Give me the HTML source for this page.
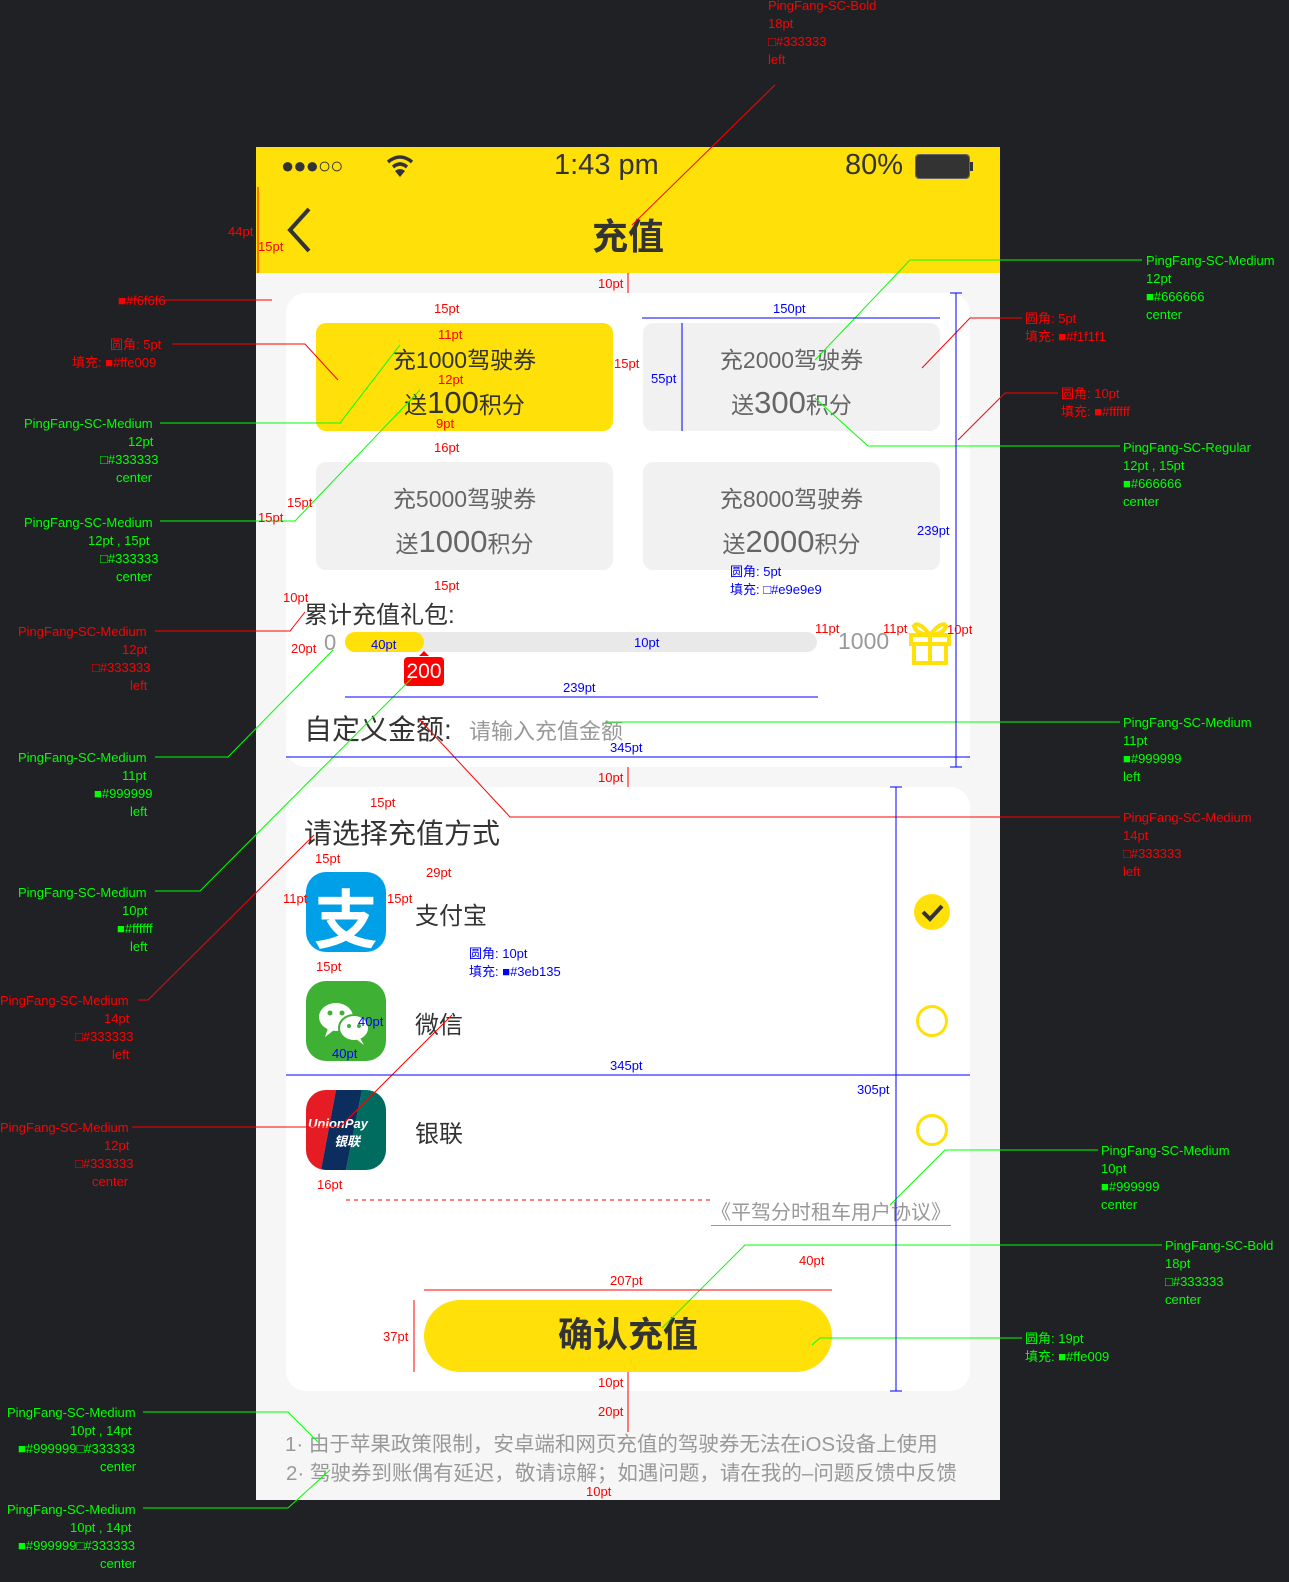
<!DOCTYPE html>
<html><head><meta charset="utf-8"><style>
*{margin:0;padding:0;box-sizing:border-box}
body{width:1289px;height:1582px;background:#202125;position:relative;overflow:hidden;font-family:"Liberation Sans","Noto Sans CJK SC",sans-serif}
.a{position:absolute;white-space:nowrap}
.phone{position:absolute;left:256px;top:147px;width:744px;height:1353px;background:#f6f6f6}
.hdr{position:absolute;left:256px;top:147px;width:744px;height:126px;background:#ffe009}
.card{position:absolute;background:#fff;border-radius:20px}
.btn{position:absolute;width:297px;height:108px;border-radius:10px;background:#f1f1f1;color:#666;text-align:center}
.btn .l1{font-size:23px;margin-top:18px}
.btn .l2{font-size:23px;margin-top:10px}
.btn .l2 b{font-weight:normal;font-size:31px}
.y{background:#ffe009;color:#333}
.ic{position:absolute;left:306px;width:80px;height:80px;border-radius:20px;overflow:hidden}
.t{color:#333;font-size:24px}
svg.ov{position:absolute;left:0;top:0}
svg text{font-family:"Liberation Sans","Noto Sans CJK SC",sans-serif;font-size:13px}
</style></head><body>
<div class="phone"></div>
<div class="hdr"></div>
<div class="a" style="left:281px;top:153px;font-size:22px;color:#333;letter-spacing:-1px">●●●○○</div>
<svg class="a" style="left:385px;top:152px" width="30" height="28" viewBox="0 0 30 28"><path d="M3 10 Q15 0 27 10" stroke="#333" stroke-width="3.5" fill="none"/><path d="M8 15 Q15 9 22 15" stroke="#333" stroke-width="3.5" fill="none"/><path d="M15 25 L10 19 Q15 15 20 19 Z" fill="#333"/></svg>
<div class="a" style="left:554px;top:149px;font-size:29px;color:#333">1:43 pm</div>
<div class="a" style="left:845px;top:149px;font-size:29px;color:#333">80%</div>
<div class="a" style="left:916px;top:155px;width:53px;height:23px;border:2px solid #333;border-radius:3px;background:#333;outline:1px solid #666"></div>
<div class="a" style="left:970px;top:162px;width:3px;height:9px;background:#333"></div>
<svg class="a" style="left:284px;top:206px" width="30" height="48"><path d="M25 3 L6 24 L25 45" stroke="#333" stroke-width="4" fill="none"/></svg>
<div class="a" style="left:592px;top:208px;font-size:36px;font-weight:bold;color:#333">充值</div>
<div class="card" style="left:286px;top:293px;width:684px;height:474px"></div>
<div class="btn y" style="left:316px;top:323px"><div class="l1">充1000驾驶券</div><div class="l2">送<b>100</b>积分</div></div>
<div class="btn" style="left:643px;top:323px"><div class="l1">充2000驾驶券</div><div class="l2">送<b>300</b>积分</div></div>
<div class="btn" style="left:316px;top:462px"><div class="l1">充5000驾驶券</div><div class="l2">送<b>1000</b>积分</div></div>
<div class="btn" style="left:643px;top:462px"><div class="l1">充8000驾驶券</div><div class="l2">送<b>2000</b>积分</div></div>
<div class="a t" style="left:304px;top:595px">累计充值礼包:</div>
<div class="a" style="left:324px;top:630px;font-size:22px;color:#999">0</div>
<div class="a" style="left:345px;top:632px;width:472px;height:20px;background:#e9e9e9;border-radius:10px"></div>
<div class="a" style="left:345px;top:632px;width:79px;height:20px;background:#ffe009;border-radius:10px"></div>
<div class="a" style="left:404px;top:657px;width:40px;height:29px;background:#f00;border-radius:4px;color:#fff;font-size:21px;text-align:center;line-height:29px">200</div>
<div class="a" style="left:419px;top:651px;border:5px solid transparent;border-bottom-color:#f00;border-top:0"></div>
<div class="a" style="left:838px;top:628px;font-size:23px;color:#999">1000</div>
<svg class="a" style="left:908px;top:620px" width="44" height="46"><g stroke="#ffe009" stroke-width="4" fill="none"><rect x="3" y="15" width="38" height="9"/><rect x="6" y="24" width="32" height="19"/><line x1="22" y1="15" x2="22" y2="43"/><path d="M22 15 Q10 0 6 6 Q8 14 22 15 Q34 0 38 6 Q36 14 22 15"/></g></svg>
<div class="a" style="left:304px;top:708px;font-size:28px;color:#333">自定义金额:</div>
<div class="a" style="left:469px;top:714px;font-size:22px;color:#999">请输入充值金额</div>
<div class="card" style="left:286px;top:787px;width:684px;height:604px"></div>
<div class="a" style="left:304px;top:812px;font-size:28px;color:#333">请选择充值方式</div>
<div class="ic" style="top:872px;background:#00a0e9"><div class="a" style="left:8px;top:-2px;font-size:64px;color:#fff;font-weight:bold">支</div></div>
<div class="a t" style="left:415px;top:896px">支付宝</div>
<div class="ic" style="top:981px;background:#3eb135"><svg width="80" height="80"><ellipse cx="30" cy="36" rx="17" ry="14" fill="#fff"/><path d="M22 47 L19 56 L28 49Z" fill="#fff"/><ellipse cx="48" cy="47" rx="15" ry="13" fill="#fff" stroke="#3eb135" stroke-width="2"/><path d="M54 57 L58 64 L50 58Z" fill="#fff"/><circle cx="24" cy="32" r="2.5" fill="#3eb135"/><circle cx="36" cy="32" r="2.5" fill="#3eb135"/><circle cx="43" cy="45" r="2" fill="#3eb135"/><circle cx="53" cy="45" r="2" fill="#3eb135"/></svg></div>
<div class="a t" style="left:415px;top:1005px">微信</div>
<div class="ic" style="top:1090px"><svg width="80" height="80"><polygon points="0,0 30,0 15,80 0,80" fill="#e51c23"/><polygon points="30,0 56,0 40,80 15,80" fill="#0b2e5e"/><polygon points="56,0 80,0 80,80 40,80" fill="#006b5f"/><text x="2" y="38" fill="#fff" font-size="18" font-weight="bold" font-style="italic">UnionPay</text><text x="28" y="56" fill="#fff" font-size="16" font-weight="bold" font-style="italic">银联</text></svg></div>
<div class="a t" style="left:415px;top:1114px">银联</div>
<div class="a" style="left:914px;top:894px;width:36px;height:36px;border-radius:50%;background:#ffe009"></div>
<svg class="a" style="left:914px;top:894px" width="36" height="36"><path d="M9 18 L16 25 L28 12" stroke="#333" stroke-width="4" fill="none"/></svg>
<div class="a" style="left:916px;top:1005px;width:32px;height:32px;border-radius:50%;border:3px solid #ffe009"></div>
<div class="a" style="left:916px;top:1114px;width:32px;height:32px;border-radius:50%;border:3px solid #ffe009"></div>
<div class="a" style="left:711px;top:1196px;font-size:20px;color:#999;border-bottom:1px solid #999">《平驾分时租车用户协议》</div>
<div class="a" style="left:424px;top:1300px;width:408px;height:72px;border-radius:36px;background:#ffe009;text-align:center;line-height:72px;font-size:35px;font-weight:bold;color:#333">确认充值</div>
<div class="a" style="left:285px;top:1427px;font-size:20.5px;color:#999">1· 由于苹果政策限制，安卓端和网页充值的驾驶券无法在iOS设备上使用</div>
<div class="a" style="left:286px;top:1456px;font-size:20.5px;color:#999">2· 驾驶券到账偶有延迟，敬请谅解；如遇问题，请在我的–问题反馈中反馈</div>
<svg class="ov" width="1289" height="1582">
<g fill="none" stroke-width="1">
<path d="M775 85 L632 225" stroke="#f00"/>
<path d="M128 300 L272 300" stroke="#f00"/>
<path d="M172 344 L305 344 L338 380" stroke="#f00"/>
<path d="M160 423 L340 423 L400 345" stroke="#0f0"/>
<path d="M160 521 L295 521 L420 390" stroke="#0f0"/>
<path d="M155 631 L290 631 L305 612" stroke="#f00"/>
<path d="M155 757 L228 757 L333 650" stroke="#0f0"/>
<path d="M155 891 L200 891 L412 678" stroke="#0f0"/>
<path d="M138 1000 L148 1000 L314 835" stroke="#f00"/>
<path d="M132 1127 L340 1127 L452 1015" stroke="#f00"/>
<path d="M143 1412 L288 1412 L318 1442" stroke="#0f0"/>
<path d="M143 1508 L288 1508 L330 1470" stroke="#0f0"/>
<path d="M1142 260 L910 260 L815 360" stroke="#0f0"/>
<path d="M1022 318 L970 318 L922 368" stroke="#f00"/>
<path d="M1058 393 L1005 393 L958 440" stroke="#f00"/>
<path d="M1120 446 L868 446 L815 398" stroke="#0f0"/>
<path d="M1120 722 L605 722" stroke="#0f0"/>
<path d="M1120 817 L510 817 L420 720" stroke="#f00"/>
<path d="M1098 1150 L945 1150 L890 1205" stroke="#0f0"/>
<path d="M1162 1245 L745 1245 L662 1328" stroke="#0f0"/>
<path d="M1022 1338 L820 1338 L812 1345" stroke="#0f0"/>
<path d="M956 293 L956 767 M950 293 L962 293 M950 767 L962 767" stroke="#00f"/>
<path d="M896 787 L896 1391 M890 787 L902 787 M890 1391 L902 1391" stroke="#00f"/>
<path d="M286 757 L970 757 M286 1075 L970 1075" stroke="#00f"/>
<path d="M642 318 L940 318 M682 323 L682 431 M345 697 L818 697" stroke="#00f"/>
<path d="M424 1290 L832 1290 M414 1300 L414 1372 M628 273 L628 293 M628 767 L628 787 M628 1372 L628 1432 M258 187 L258 273" stroke="#f00"/>
<path d="M346 1200 L710 1200" stroke="#f00" stroke-dasharray="4 4"/>
</g>
<g fill="#f00">
<text x="768" y="10">PingFang-SC-Bold</text><text x="768" y="28">18pt</text><text x="768" y="46">□#333333</text><text x="768" y="64">left</text>
<text x="118" y="305">■#f6f6f6</text>
<text x="110" y="349">圆角:  5pt</text><text x="72" y="367">填充:  ■#ffe009</text>
<text x="18" y="636">PingFang-SC-Medium</text><text x="122" y="654">12pt</text><text x="92" y="672">□#333333</text><text x="130" y="690">left</text>
<text x="0" y="1005">PingFang-SC-Medium</text><text x="104" y="1023">14pt</text><text x="75" y="1041">□#333333</text><text x="112" y="1059">left</text>
<text x="0" y="1132">PingFang-SC-Medium</text><text x="104" y="1150">12pt</text><text x="75" y="1168">□#333333</text><text x="92" y="1186">center</text>
<text x="1025" y="323">圆角:  5pt</text><text x="1025" y="341">填充:  ■#f1f1f1</text>
<text x="1061" y="398">圆角:  10pt</text><text x="1061" y="416">填充:  ■#ffffff</text>
<text x="1123" y="822">PingFang-SC-Medium</text><text x="1123" y="840">14pt</text><text x="1123" y="858">□#333333</text><text x="1123" y="876">left</text>
<text x="228" y="236">44pt</text><text x="258" y="251">15pt</text><text x="598" y="288">10pt</text><text x="434" y="313">15pt</text><text x="438" y="339">11pt</text><text x="438" y="384">12pt</text><text x="436" y="428">9pt</text><text x="434" y="452">16pt</text><text x="614" y="368">15pt</text><text x="287" y="507">15pt</text><text x="258" y="522">15pt</text><text x="434" y="590">15pt</text><text x="283" y="602">10pt</text><text x="291" y="653">20pt</text><text x="815" y="633">11pt</text><text x="883" y="633">11pt</text><text x="947" y="634">10pt</text><text x="598" y="782">10pt</text><text x="370" y="807">15pt</text><text x="315" y="863">15pt</text><text x="426" y="877">29pt</text><text x="283" y="903">11pt</text><text x="387" y="903">15pt</text><text x="316" y="971">15pt</text><text x="317" y="1189">16pt</text><text x="799" y="1265">40pt</text><text x="610" y="1285">207pt</text><text x="383" y="1341">37pt</text><text x="598" y="1387">10pt</text><text x="598" y="1416">20pt</text><text x="586" y="1496">10pt</text>
</g>
<g fill="#0f0">
<text x="24" y="428">PingFang-SC-Medium</text><text x="128" y="446">12pt</text><text x="100" y="464">□#333333</text><text x="116" y="482">center</text>
<text x="24" y="527">PingFang-SC-Medium</text><text x="88" y="545">12pt , 15pt</text><text x="100" y="563">□#333333</text><text x="116" y="581">center</text>
<text x="18" y="762">PingFang-SC-Medium</text><text x="122" y="780">11pt</text><text x="94" y="798">■#999999</text><text x="130" y="816">left</text>
<text x="18" y="897">PingFang-SC-Medium</text><text x="122" y="915">10pt</text><text x="117" y="933">■#ffffff</text><text x="130" y="951">left</text>
<text x="7" y="1417">PingFang-SC-Medium</text><text x="70" y="1435">10pt , 14pt</text><text x="18" y="1453">■#999999□#333333</text><text x="100" y="1471">center</text>
<text x="7" y="1514">PingFang-SC-Medium</text><text x="70" y="1532">10pt , 14pt</text><text x="18" y="1550">■#999999□#333333</text><text x="100" y="1568">center</text>
<text x="1146" y="265">PingFang-SC-Medium</text><text x="1146" y="283">12pt</text><text x="1146" y="301">■#666666</text><text x="1146" y="319">center</text>
<text x="1123" y="452">PingFang-SC-Regular</text><text x="1123" y="470">12pt , 15pt</text><text x="1123" y="488">■#666666</text><text x="1123" y="506">center</text>
<text x="1123" y="727">PingFang-SC-Medium</text><text x="1123" y="745">11pt</text><text x="1123" y="763">■#999999</text><text x="1123" y="781">left</text>
<text x="1101" y="1155">PingFang-SC-Medium</text><text x="1101" y="1173">10pt</text><text x="1101" y="1191">■#999999</text><text x="1101" y="1209">center</text>
<text x="1165" y="1250">PingFang-SC-Bold</text><text x="1165" y="1268">18pt</text><text x="1165" y="1286">□#333333</text><text x="1165" y="1304">center</text>
<text x="1025" y="1343">圆角:  19pt</text><text x="1025" y="1361">填充:  ■#ffe009</text>
</g>
<g fill="#00f">
<text x="773" y="313">150pt</text><text x="651" y="383">55pt</text><text x="917" y="535">239pt</text><text x="730" y="576">圆角:  5pt</text><text x="730" y="594">填充:  □#e9e9e9</text><text x="371" y="649">40pt</text><text x="634" y="647">10pt</text><text x="563" y="692">239pt</text><text x="610" y="752">345pt</text><text x="469" y="958">圆角:  10pt</text><text x="469" y="976">填充:  ■#3eb135</text><text x="358" y="1026">40pt</text><text x="332" y="1058">40pt</text><text x="610" y="1070">345pt</text><text x="857" y="1094">305pt</text>
</g>
</svg>
</body></html>
